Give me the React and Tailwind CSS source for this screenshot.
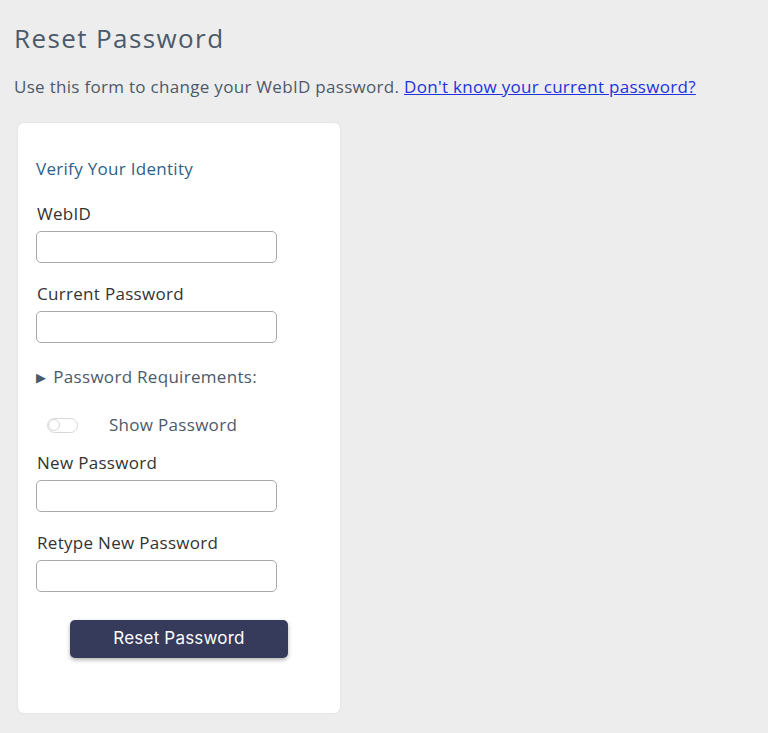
export default function App() {
  const fields1 = ["WebID", "Current Password"];
  const fields2 = ["New Password", "Retype New Password"];

  const Field = ({ label }) => (
    <div className="flex flex-col">
      <label className="text-[17px] leading-[22px] tracking-[0.3px] text-[#333] pl-[1px]">{label}</label>
      <input
        type="text"
        className="mt-[6px] w-[241px] h-[32px] rounded-[5px] border-[1.5px] border-[#aaa] bg-white"
      />
    </div>
  );

  return (
    <div
      className="min-h-[733px] bg-[#ededed] pl-[14px] pt-[20px]"
      style={{ fontFamily: '"Open Sans", sans-serif' }}
    >
      <h1 className="text-[26px] leading-[36px] text-[#4b5a6a] tracking-[1.4px]">Reset Password</h1>
      <p className="mt-[18px] text-[17px] leading-[26px] tracking-[0.3px] text-[#4b5a6a]">
        Use this form to change your WebID password.{" "}
        <a href="#" className="text-[#2233dd] underline">
          Don't know your current password?
        </a>
      </p>

      <div className="mt-[23px] ml-[4px] w-[322px] h-[590px] rounded-[6px] bg-white shadow-[0_0_3px_rgba(0,0,0,0.08)] pl-[18px] pt-[33px]">
        <h2 className="text-[17px] leading-[26px] tracking-[0.3px] text-[#2e5f8a]">Verify Your Identity</h2>

        <div className="mt-[21px] flex flex-col gap-[20px]">
          {fields1.map((f) => (
            <Field key={f} label={f} />
          ))}
        </div>

        <div className="mt-[23px] flex items-center text-[17px] leading-[22px] tracking-[0.3px] text-[#4b5a6a]">
          <span className="text-[13px] mr-[7px]">▶</span>
          <span>Password Requirements:</span>
        </div>

        <div className="mt-[26px] flex items-center">
          <div className="ml-[11px] w-[31px] h-[15px] rounded-full border-[1.5px] border-[#d8d8d8] flex items-center">
            <div className="w-[12px] h-[12px] rounded-full border-[1.5px] border-[#d8d8d8] bg-white"></div>
          </div>
          <span className="ml-[31px] text-[17px] leading-[22px] tracking-[0.3px] text-[#4b5a6a]">Show Password</span>
        </div>

        <div className="mt-[16px] flex flex-col gap-[20px]">
          {fields2.map((f) => (
            <Field key={f} label={f} />
          ))}
        </div>

        <button
          className="mt-[28px] ml-[34px] w-[218px] h-[38px] rounded-[5px] bg-[#363a5b] text-white text-[17px] tracking-[0.2px] shadow-[0_2px_4px_rgba(0,0,0,0.3)]"
          style={{ fontFamily: "Inter, sans-serif" }}
        >
          Reset Password
        </button>
      </div>
    </div>
  );
}
